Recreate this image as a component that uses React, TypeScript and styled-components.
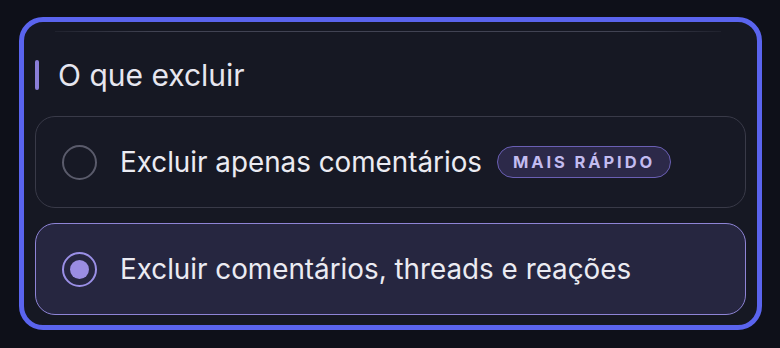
import { useState } from "react";
import styled, { createGlobalStyle } from "styled-components";

const GlobalStyle = createGlobalStyle`
  * { box-sizing: border-box; }
  html, body {
    margin: 0;
    padding: 0;
    background: #0e1019;
    font-family: Inter, "Noto Sans", "Liberation Sans", sans-serif;
    -webkit-font-smoothing: antialiased;
  }
`;

const Page = styled.div`
  width: 780px;
  height: 348px;
  padding: 17px 18px 18px 19px;
`;

const Panel = styled.section`
  width: 743px;
  height: 313px;
  border: 5px solid #5a64ee;
  border-radius: 24px;
  background: #161823;
  padding: 9px 11px 10px 11px;
  display: flex;
  flex-direction: column;
`;

const TopRule = styled.div`
  height: 1px;
  margin: 0 25px 0 20px;
  background: linear-gradient(
    90deg,
    rgba(70, 72, 88, 0.2) 0%,
    rgba(70, 72, 88, 0.9) 15%,
    rgba(70, 72, 88, 0.9) 85%,
    rgba(70, 72, 88, 0.2) 100%
  );
`;

const Heading = styled.h2`
  display: flex;
  align-items: center;
  gap: 19px;
  margin: 28px 0 26px 0;
  font-size: 30px;
  font-weight: 400;
  color: #e6e6ef;
  line-height: 30px;
  height: 30px;

  &::before {
    content: "";
    width: 4px;
    height: 30px;
    border-radius: 2px;
    background: #8a7ed8;
  }
`;

const Options = styled.div`
  display: flex;
  flex-direction: column;
  gap: 15px;
`;

const Option = styled.button<{ $selected: boolean }>`
  display: flex;
  align-items: center;
  gap: 23px;
  height: 92px;
  padding: 0 26px;
  border-radius: 20px;
  border: 1.5px solid ${(p) => (p.$selected ? "#8e84d6" : "#393a48")};
  background: ${(p) => (p.$selected ? "#262640" : "#171925")};
  font-family: inherit;
  text-align: left;
  cursor: pointer;
`;

const Radio = styled.span<{ $checked: boolean }>`
  width: 35px;
  height: 35px;
  flex-shrink: 0;
  border-radius: 50%;
  border: 2px solid ${(p) => (p.$checked ? "#9a8fe6" : "#5a5b6b")};
  display: flex;
  align-items: center;
  justify-content: center;

  &::after {
    content: "";
    width: 19px;
    height: 19px;
    border-radius: 50%;
    background: #9a8de2;
    display: ${(p) => (p.$checked ? "block" : "none")};
  }
`;

const Label = styled.span`
  font-size: 27.8px;
  color: #ebebf2;
`;

const Badge = styled.span`
  margin-left: -8px;
  height: 32px;
  padding: 0 15px;
  display: inline-flex;
  align-items: center;
  border-radius: 16px;
  border: 1.5px solid #6a5fb4;
  background: #2c2949;
  color: #c3bcf0;
  font-size: 16.5px;
  font-weight: 700;
  letter-spacing: 2.9px;
`;

const choices = [
  { id: "comments", label: "Excluir apenas comentários", badge: "MAIS RÁPIDO" },
  { id: "all", label: "Excluir comentários, threads e reações" },
];

export default function App() {
  const [selected, setSelected] = useState("all");

  return (
    <>
      <GlobalStyle />
      <Page>
        <Panel>
          <TopRule />
          <Heading>O que excluir</Heading>
          <Options>
            {choices.map((c) => (
              <Option
                key={c.id}
                $selected={selected === c.id}
                onClick={() => setSelected(c.id)}
              >
                <Radio $checked={selected === c.id} />
                <Label>{c.label}</Label>
                {c.badge && <Badge>{c.badge}</Badge>}
              </Option>
            ))}
          </Options>
        </Panel>
      </Page>
    </>
  );
}
